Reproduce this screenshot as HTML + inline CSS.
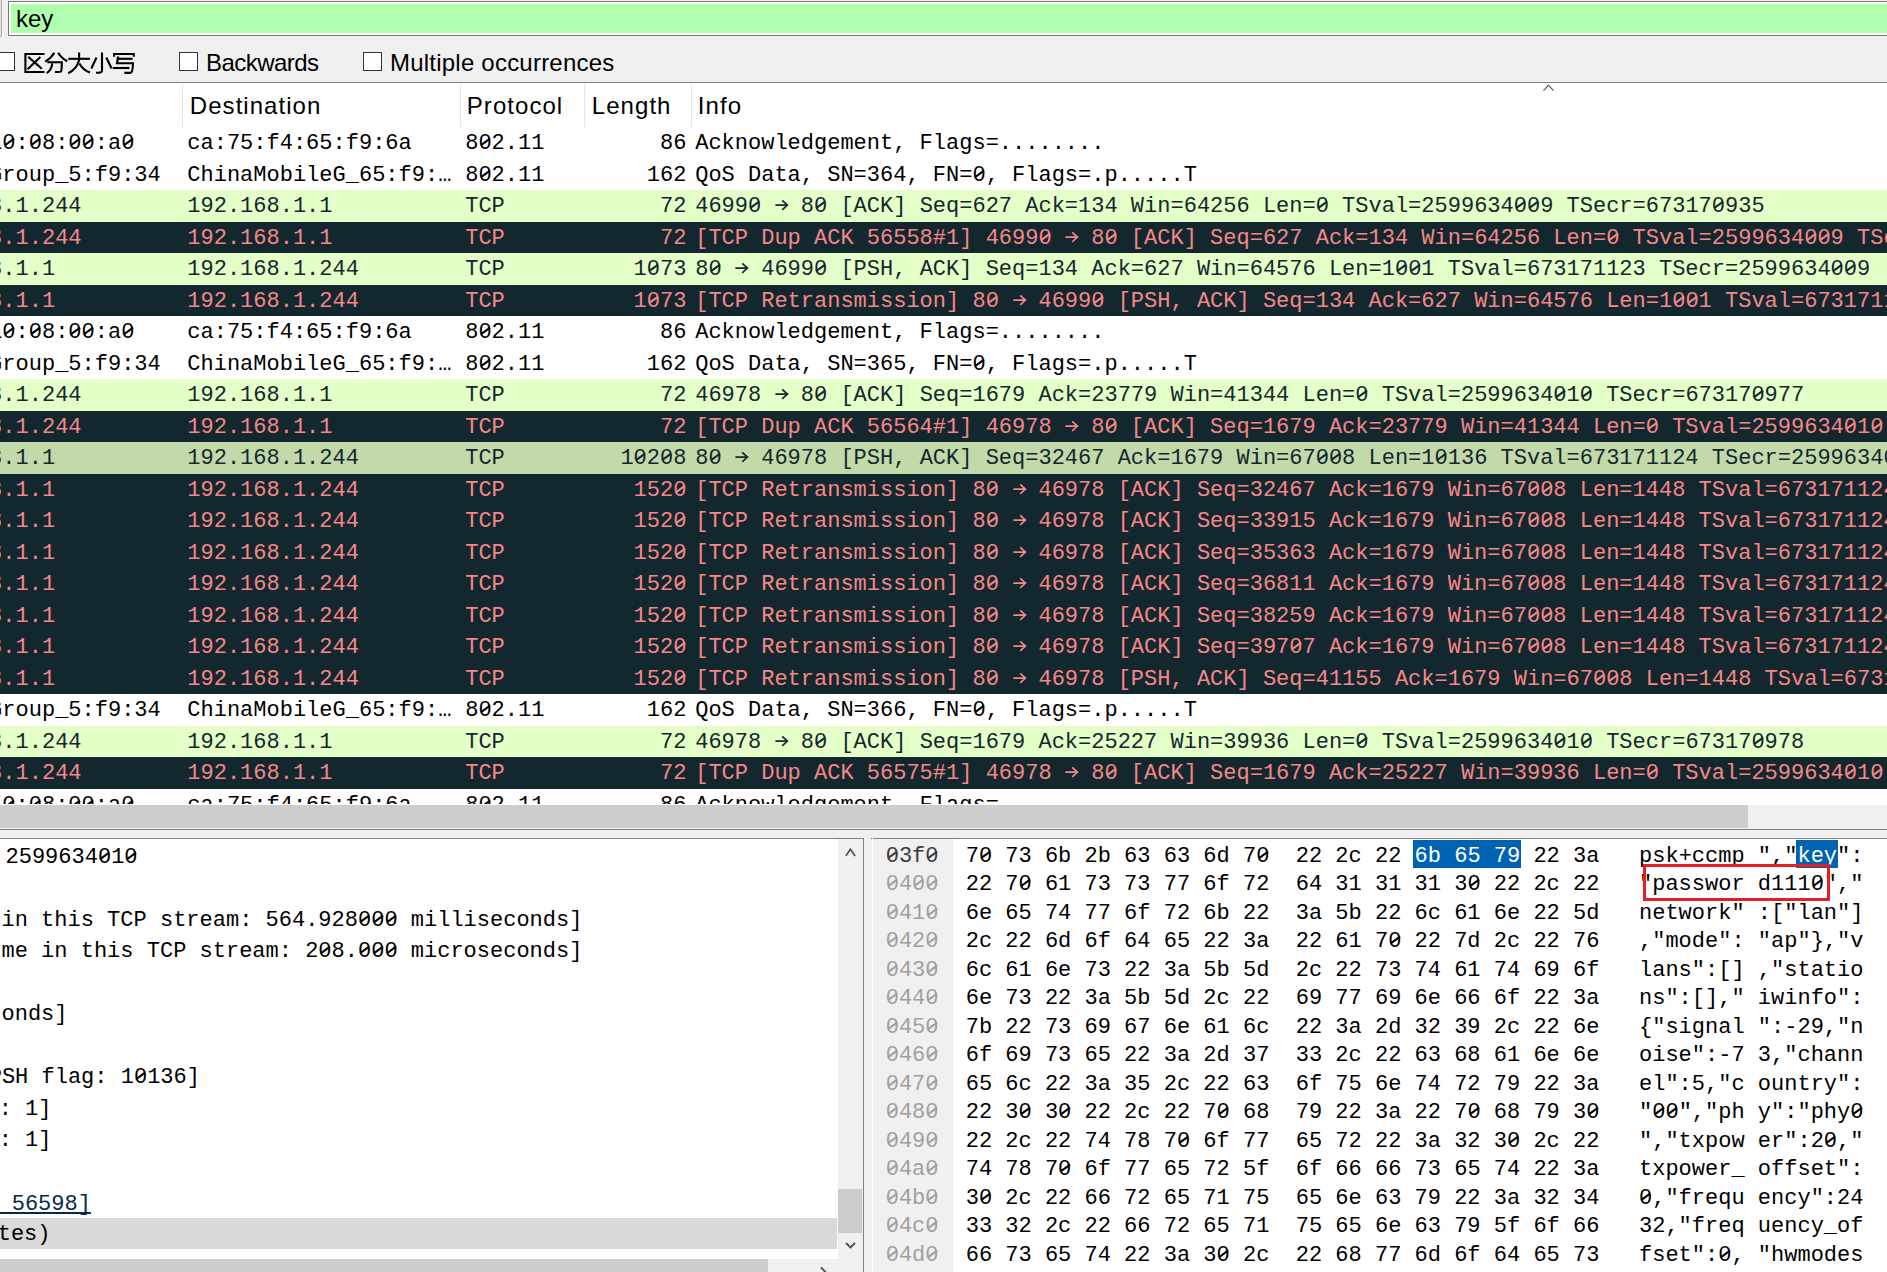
<!DOCTYPE html>
<html><head><meta charset="utf-8"><style>
*{margin:0;padding:0;box-sizing:border-box}
html,body{width:1887px;height:1272px;overflow:hidden;background:#f0f0f0}
body{position:relative;font-family:"Liberation Sans",sans-serif}
.a{position:absolute}
.m{font-family:"Liberation Mono",monospace;font-size:22px;white-space:pre;line-height:31.5px}
.s{font-family:"Liberation Sans",sans-serif;font-size:24px;white-space:pre;letter-spacing:1.05px}
.r{position:absolute;left:0;width:1887px;height:31.5px;overflow:hidden}
.c{position:absolute;top:1px}
.z{font-style:normal;position:relative}
.z::before{content:"";position:absolute;left:4.6px;top:9.3px;width:4px;height:4px;background:var(--bg)}
.z::after{content:"";position:absolute;left:1.4px;top:10.1px;width:10.6px;height:1.6px;background:currentColor;transform:rotate(-36deg)}
</style></head><body>

<div class="a" style="left:-10px;top:-2px;width:12px;height:39px;border:1px solid #adadad;border-radius:2px;background:#e1e1e1"></div>
<div class="a" style="left:8px;top:1px;width:1900px;height:35px;border:1px solid #7a7a7a;background:#fff"></div>
<div class="a" style="left:11px;top:4px;width:1900px;height:29px;background:#afffaf"></div>
<div class="a s" style="left:16px;top:4px;line-height:29px;letter-spacing:0">key</div>
<div class="a" style="left:-4px;top:52px;width:19px;height:19px;border:1.5px solid #333;background:#fff"></div>
<div class="a" style="left:179px;top:52px;width:19px;height:19px;border:1.5px solid #333;background:#fff"></div>
<div class="a" style="left:363px;top:52px;width:19px;height:19px;border:1.5px solid #333;background:#fff"></div>
<div class="a s" style="left:206px;top:48px;line-height:29px;letter-spacing:-0.55px">Backwards</div>
<div class="a s" style="left:390px;top:48px;line-height:29px;letter-spacing:0.22px">Multiple occurrences</div>
<svg class="a" style="left:0;top:0" width="150" height="80" viewBox="0 0 150 80" fill="none" stroke="#000" stroke-width="2.1" stroke-linecap="butt">
<path d="M44.5 54H25.4V72H44.5"/><path d="M28.3 56.9L41.8 68.8M40.3 56.9L27.6 69.2"/>
<path d="M54.3 52.8Q51 58.5 45.2 61.6"/><path d="M58.2 52.8Q61.5 58.5 67.3 61.2"/>
<path d="M47.3 62.3H61.8Q61.8 70 61 71.5Q60 72.3 55 72"/><path d="M52.3 63.3Q51.5 70 46.6 73.2"/>
<path d="M68.3 58.8H90"/><path d="M79.1 52.5V60Q77 69 68.2 73.2"/><path d="M79.4 63.5Q83 70 90 72.6"/>
<path d="M102 52.5V71Q101.5 73 96 72.8"/><path d="M96.5 57.5L91.3 68.5"/><path d="M106.3 57.5L111.6 68.5"/>
<path d="M114.1 56.8V54H133.8V56.8"/><path d="M116.7 58.8H132.6"/><path d="M118.3 56.5L117 63.3H133Q132.7 72 131 72.6Q129 73 124.3 72.8"/><path d="M112.8 68H129.4"/>
</svg>
<div class="a" style="left:0;top:82px;width:1887px;height:1px;background:#7d828c"></div>
<div class="a" style="left:0;top:83px;width:1887px;height:722px;background:#fff"></div>
<div class="a" style="left:182px;top:84px;width:1px;height:43px;background:#e5e5e5"></div>
<div class="a" style="left:460px;top:84px;width:1px;height:43px;background:#e5e5e5"></div>
<div class="a" style="left:584px;top:84px;width:1px;height:43px;background:#e5e5e5"></div>
<div class="a" style="left:691px;top:84px;width:1px;height:43px;background:#e5e5e5"></div>
<div class="a s" style="left:189.8px;top:84px;line-height:44px">Destination</div>
<div class="a s" style="left:466.8px;top:84px;line-height:44px">Protocol</div>
<div class="a s" style="left:591.8px;top:84px;line-height:44px">Length</div>
<div class="a s" style="left:697.8px;top:84px;line-height:44px">Info</div>
<svg class="a" style="left:1540px;top:83px" width="16" height="10"><path d="M3.4 7.6L8.5 2.3L13.6 7.6" fill="none" stroke="#505050" stroke-width="1.1"/></svg>
<div class="a" style="left:0;top:127px;width:1887px;height:677px;overflow:hidden">
<div class="r m" style="top:0.00px;background:#ffffff;color:#000000;--bg:#ffffff">
<span class="c" style="left:-90.10px">9c:a6:a<i class="z">0</i>:<i class="z">0</i>8:<i class="z">0</i><i class="z">0</i>:a<i class="z">0</i></span>
<span class="c" style="left:187.3px">ca:75:f4:65:f9:6a</span>
<span class="c" style="left:465.2px">8<i class="z">0</i>2.11</span>
<span class="c" style="left:660.00px">86</span>
<span class="c" style="left:695.2px">Acknowledgement, Flags=........</span>
</div>
<div class="r m" style="top:31.50px;background:#ffffff;color:#000000;--bg:#ffffff">
<span class="c" style="left:-90.10px">HuaweiGroup_5:f9:34</span>
<span class="c" style="left:187.3px">ChinaMobileG_65:f9:…</span>
<span class="c" style="left:465.2px">8<i class="z">0</i>2.11</span>
<span class="c" style="left:646.80px">162</span>
<span class="c" style="left:695.2px">QoS Data, SN=364, FN=<i class="z">0</i>, Flags=.p.....T</span>
</div>
<div class="r m" style="top:63.00px;background:#e4ffc7;color:#12272e;--bg:#e4ffc7">
<span class="c" style="left:-90.10px">192.168.1.244</span>
<span class="c" style="left:187.3px">192.168.1.1</span>
<span class="c" style="left:465.2px">TCP</span>
<span class="c" style="left:660.00px">72</span>
<span class="c" style="left:695.2px">4699<i class="z">0</i>   8<i class="z">0</i> [ACK] Seq=627 Ack=134 Win=64256 Len=<i class="z">0</i> TSval=2599634<i class="z">0</i><i class="z">0</i>9 TSecr=67317<i class="z">0</i>935</span>
<svg class="c" style="left:773.90px;top:0" width="16" height="31"><path d="M1.4 15.1H14.2M8.2 10.3L13.4 15.1L8.2 19.9" fill="none" stroke="#12272e" stroke-width="1.65"/></svg>
</div>
<div class="r m" style="top:94.50px;background:#12272e;color:#f78787;--bg:#12272e">
<span class="c" style="left:-90.10px">192.168.1.244</span>
<span class="c" style="left:187.3px">192.168.1.1</span>
<span class="c" style="left:465.2px">TCP</span>
<span class="c" style="left:660.00px">72</span>
<span class="c" style="left:695.2px">[TCP Dup ACK 56558#1] 4699<i class="z">0</i>   8<i class="z">0</i> [ACK] Seq=627 Ack=134 Win=64256 Len=<i class="z">0</i> TSval=2599634<i class="z">0</i><i class="z">0</i>9 TSecr=67317<i class="z">0</i>935</span>
<svg class="c" style="left:1064.30px;top:0" width="16" height="31"><path d="M1.4 15.1H14.2M8.2 10.3L13.4 15.1L8.2 19.9" fill="none" stroke="#f78787" stroke-width="1.65"/></svg>
</div>
<div class="r m" style="top:126.00px;background:#e4ffc7;color:#12272e;--bg:#e4ffc7">
<span class="c" style="left:-90.10px">192.168.1.1</span>
<span class="c" style="left:187.3px">192.168.1.244</span>
<span class="c" style="left:465.2px">TCP</span>
<span class="c" style="left:633.60px">1<i class="z">0</i>73</span>
<span class="c" style="left:695.2px">8<i class="z">0</i>   4699<i class="z">0</i> [PSH, ACK] Seq=134 Ack=627 Win=64576 Len=1<i class="z">0</i><i class="z">0</i>1 TSval=673171123 TSecr=2599634<i class="z">0</i><i class="z">0</i>9</span>
<svg class="c" style="left:734.30px;top:0" width="16" height="31"><path d="M1.4 15.1H14.2M8.2 10.3L13.4 15.1L8.2 19.9" fill="none" stroke="#12272e" stroke-width="1.65"/></svg>
</div>
<div class="r m" style="top:157.50px;background:#12272e;color:#f78787;--bg:#12272e">
<span class="c" style="left:-90.10px">192.168.1.1</span>
<span class="c" style="left:187.3px">192.168.1.244</span>
<span class="c" style="left:465.2px">TCP</span>
<span class="c" style="left:633.60px">1<i class="z">0</i>73</span>
<span class="c" style="left:695.2px">[TCP Retransmission] 8<i class="z">0</i>   4699<i class="z">0</i> [PSH, ACK] Seq=134 Ack=627 Win=64576 Len=1<i class="z">0</i><i class="z">0</i>1 TSval=673171123 TSecr=2599634<i class="z">0</i><i class="z">0</i>9</span>
<svg class="c" style="left:1011.50px;top:0" width="16" height="31"><path d="M1.4 15.1H14.2M8.2 10.3L13.4 15.1L8.2 19.9" fill="none" stroke="#f78787" stroke-width="1.65"/></svg>
</div>
<div class="r m" style="top:189.00px;background:#ffffff;color:#000000;--bg:#ffffff">
<span class="c" style="left:-90.10px">9c:a6:a<i class="z">0</i>:<i class="z">0</i>8:<i class="z">0</i><i class="z">0</i>:a<i class="z">0</i></span>
<span class="c" style="left:187.3px">ca:75:f4:65:f9:6a</span>
<span class="c" style="left:465.2px">8<i class="z">0</i>2.11</span>
<span class="c" style="left:660.00px">86</span>
<span class="c" style="left:695.2px">Acknowledgement, Flags=........</span>
</div>
<div class="r m" style="top:220.50px;background:#ffffff;color:#000000;--bg:#ffffff">
<span class="c" style="left:-90.10px">HuaweiGroup_5:f9:34</span>
<span class="c" style="left:187.3px">ChinaMobileG_65:f9:…</span>
<span class="c" style="left:465.2px">8<i class="z">0</i>2.11</span>
<span class="c" style="left:646.80px">162</span>
<span class="c" style="left:695.2px">QoS Data, SN=365, FN=<i class="z">0</i>, Flags=.p.....T</span>
</div>
<div class="r m" style="top:252.00px;background:#e4ffc7;color:#12272e;--bg:#e4ffc7">
<span class="c" style="left:-90.10px">192.168.1.244</span>
<span class="c" style="left:187.3px">192.168.1.1</span>
<span class="c" style="left:465.2px">TCP</span>
<span class="c" style="left:660.00px">72</span>
<span class="c" style="left:695.2px">46978   8<i class="z">0</i> [ACK] Seq=1679 Ack=23779 Win=41344 Len=<i class="z">0</i> TSval=2599634<i class="z">0</i>1<i class="z">0</i> TSecr=67317<i class="z">0</i>977</span>
<svg class="c" style="left:773.90px;top:0" width="16" height="31"><path d="M1.4 15.1H14.2M8.2 10.3L13.4 15.1L8.2 19.9" fill="none" stroke="#12272e" stroke-width="1.65"/></svg>
</div>
<div class="r m" style="top:283.50px;background:#12272e;color:#f78787;--bg:#12272e">
<span class="c" style="left:-90.10px">192.168.1.244</span>
<span class="c" style="left:187.3px">192.168.1.1</span>
<span class="c" style="left:465.2px">TCP</span>
<span class="c" style="left:660.00px">72</span>
<span class="c" style="left:695.2px">[TCP Dup ACK 56564#1] 46978   8<i class="z">0</i> [ACK] Seq=1679 Ack=23779 Win=41344 Len=<i class="z">0</i> TSval=2599634<i class="z">0</i>1<i class="z">0</i> TSecr=67317<i class="z">0</i>977</span>
<svg class="c" style="left:1064.30px;top:0" width="16" height="31"><path d="M1.4 15.1H14.2M8.2 10.3L13.4 15.1L8.2 19.9" fill="none" stroke="#f78787" stroke-width="1.65"/></svg>
</div>
<div class="r m" style="top:315.00px;background:#c3d9a9;color:#12272e;--bg:#c3d9a9">
<span class="c" style="left:-90.10px">192.168.1.1</span>
<span class="c" style="left:187.3px">192.168.1.244</span>
<span class="c" style="left:465.2px">TCP</span>
<span class="c" style="left:620.40px">1<i class="z">0</i>2<i class="z">0</i>8</span>
<span class="c" style="left:695.2px">8<i class="z">0</i>   46978 [PSH, ACK] Seq=32467 Ack=1679 Win=67<i class="z">0</i><i class="z">0</i>8 Len=1<i class="z">0</i>136 TSval=673171124 TSecr=2599634<i class="z">0</i>1<i class="z">0</i></span>
<svg class="c" style="left:734.30px;top:0" width="16" height="31"><path d="M1.4 15.1H14.2M8.2 10.3L13.4 15.1L8.2 19.9" fill="none" stroke="#12272e" stroke-width="1.65"/></svg>
</div>
<div class="r m" style="top:346.50px;background:#12272e;color:#f78787;--bg:#12272e">
<span class="c" style="left:-90.10px">192.168.1.1</span>
<span class="c" style="left:187.3px">192.168.1.244</span>
<span class="c" style="left:465.2px">TCP</span>
<span class="c" style="left:633.60px">152<i class="z">0</i></span>
<span class="c" style="left:695.2px">[TCP Retransmission] 8<i class="z">0</i>   46978 [ACK] Seq=32467 Ack=1679 Win=67<i class="z">0</i><i class="z">0</i>8 Len=1448 TSval=673171124 TSecr=2599634<i class="z">0</i>1<i class="z">0</i></span>
<svg class="c" style="left:1011.50px;top:0" width="16" height="31"><path d="M1.4 15.1H14.2M8.2 10.3L13.4 15.1L8.2 19.9" fill="none" stroke="#f78787" stroke-width="1.65"/></svg>
</div>
<div class="r m" style="top:378.00px;background:#12272e;color:#f78787;--bg:#12272e">
<span class="c" style="left:-90.10px">192.168.1.1</span>
<span class="c" style="left:187.3px">192.168.1.244</span>
<span class="c" style="left:465.2px">TCP</span>
<span class="c" style="left:633.60px">152<i class="z">0</i></span>
<span class="c" style="left:695.2px">[TCP Retransmission] 8<i class="z">0</i>   46978 [ACK] Seq=33915 Ack=1679 Win=67<i class="z">0</i><i class="z">0</i>8 Len=1448 TSval=673171124 TSecr=2599634<i class="z">0</i>1<i class="z">0</i></span>
<svg class="c" style="left:1011.50px;top:0" width="16" height="31"><path d="M1.4 15.1H14.2M8.2 10.3L13.4 15.1L8.2 19.9" fill="none" stroke="#f78787" stroke-width="1.65"/></svg>
</div>
<div class="r m" style="top:409.50px;background:#12272e;color:#f78787;--bg:#12272e">
<span class="c" style="left:-90.10px">192.168.1.1</span>
<span class="c" style="left:187.3px">192.168.1.244</span>
<span class="c" style="left:465.2px">TCP</span>
<span class="c" style="left:633.60px">152<i class="z">0</i></span>
<span class="c" style="left:695.2px">[TCP Retransmission] 8<i class="z">0</i>   46978 [ACK] Seq=35363 Ack=1679 Win=67<i class="z">0</i><i class="z">0</i>8 Len=1448 TSval=673171124 TSecr=2599634<i class="z">0</i>1<i class="z">0</i></span>
<svg class="c" style="left:1011.50px;top:0" width="16" height="31"><path d="M1.4 15.1H14.2M8.2 10.3L13.4 15.1L8.2 19.9" fill="none" stroke="#f78787" stroke-width="1.65"/></svg>
</div>
<div class="r m" style="top:441.00px;background:#12272e;color:#f78787;--bg:#12272e">
<span class="c" style="left:-90.10px">192.168.1.1</span>
<span class="c" style="left:187.3px">192.168.1.244</span>
<span class="c" style="left:465.2px">TCP</span>
<span class="c" style="left:633.60px">152<i class="z">0</i></span>
<span class="c" style="left:695.2px">[TCP Retransmission] 8<i class="z">0</i>   46978 [ACK] Seq=36811 Ack=1679 Win=67<i class="z">0</i><i class="z">0</i>8 Len=1448 TSval=673171124 TSecr=2599634<i class="z">0</i>1<i class="z">0</i></span>
<svg class="c" style="left:1011.50px;top:0" width="16" height="31"><path d="M1.4 15.1H14.2M8.2 10.3L13.4 15.1L8.2 19.9" fill="none" stroke="#f78787" stroke-width="1.65"/></svg>
</div>
<div class="r m" style="top:472.50px;background:#12272e;color:#f78787;--bg:#12272e">
<span class="c" style="left:-90.10px">192.168.1.1</span>
<span class="c" style="left:187.3px">192.168.1.244</span>
<span class="c" style="left:465.2px">TCP</span>
<span class="c" style="left:633.60px">152<i class="z">0</i></span>
<span class="c" style="left:695.2px">[TCP Retransmission] 8<i class="z">0</i>   46978 [ACK] Seq=38259 Ack=1679 Win=67<i class="z">0</i><i class="z">0</i>8 Len=1448 TSval=673171124 TSecr=2599634<i class="z">0</i>1<i class="z">0</i></span>
<svg class="c" style="left:1011.50px;top:0" width="16" height="31"><path d="M1.4 15.1H14.2M8.2 10.3L13.4 15.1L8.2 19.9" fill="none" stroke="#f78787" stroke-width="1.65"/></svg>
</div>
<div class="r m" style="top:504.00px;background:#12272e;color:#f78787;--bg:#12272e">
<span class="c" style="left:-90.10px">192.168.1.1</span>
<span class="c" style="left:187.3px">192.168.1.244</span>
<span class="c" style="left:465.2px">TCP</span>
<span class="c" style="left:633.60px">152<i class="z">0</i></span>
<span class="c" style="left:695.2px">[TCP Retransmission] 8<i class="z">0</i>   46978 [ACK] Seq=397<i class="z">0</i>7 Ack=1679 Win=67<i class="z">0</i><i class="z">0</i>8 Len=1448 TSval=673171124 TSecr=2599634<i class="z">0</i>1<i class="z">0</i></span>
<svg class="c" style="left:1011.50px;top:0" width="16" height="31"><path d="M1.4 15.1H14.2M8.2 10.3L13.4 15.1L8.2 19.9" fill="none" stroke="#f78787" stroke-width="1.65"/></svg>
</div>
<div class="r m" style="top:535.50px;background:#12272e;color:#f78787;--bg:#12272e">
<span class="c" style="left:-90.10px">192.168.1.1</span>
<span class="c" style="left:187.3px">192.168.1.244</span>
<span class="c" style="left:465.2px">TCP</span>
<span class="c" style="left:633.60px">152<i class="z">0</i></span>
<span class="c" style="left:695.2px">[TCP Retransmission] 8<i class="z">0</i>   46978 [PSH, ACK] Seq=41155 Ack=1679 Win=67<i class="z">0</i><i class="z">0</i>8 Len=1448 TSval=673171124 TSecr=2599634<i class="z">0</i>1<i class="z">0</i></span>
<svg class="c" style="left:1011.50px;top:0" width="16" height="31"><path d="M1.4 15.1H14.2M8.2 10.3L13.4 15.1L8.2 19.9" fill="none" stroke="#f78787" stroke-width="1.65"/></svg>
</div>
<div class="r m" style="top:567.00px;background:#ffffff;color:#000000;--bg:#ffffff">
<span class="c" style="left:-90.10px">HuaweiGroup_5:f9:34</span>
<span class="c" style="left:187.3px">ChinaMobileG_65:f9:…</span>
<span class="c" style="left:465.2px">8<i class="z">0</i>2.11</span>
<span class="c" style="left:646.80px">162</span>
<span class="c" style="left:695.2px">QoS Data, SN=366, FN=<i class="z">0</i>, Flags=.p.....T</span>
</div>
<div class="r m" style="top:598.50px;background:#e4ffc7;color:#12272e;--bg:#e4ffc7">
<span class="c" style="left:-90.10px">192.168.1.244</span>
<span class="c" style="left:187.3px">192.168.1.1</span>
<span class="c" style="left:465.2px">TCP</span>
<span class="c" style="left:660.00px">72</span>
<span class="c" style="left:695.2px">46978   8<i class="z">0</i> [ACK] Seq=1679 Ack=25227 Win=39936 Len=<i class="z">0</i> TSval=2599634<i class="z">0</i>1<i class="z">0</i> TSecr=67317<i class="z">0</i>978</span>
<svg class="c" style="left:773.90px;top:0" width="16" height="31"><path d="M1.4 15.1H14.2M8.2 10.3L13.4 15.1L8.2 19.9" fill="none" stroke="#12272e" stroke-width="1.65"/></svg>
</div>
<div class="r m" style="top:630.00px;background:#12272e;color:#f78787;--bg:#12272e">
<span class="c" style="left:-90.10px">192.168.1.244</span>
<span class="c" style="left:187.3px">192.168.1.1</span>
<span class="c" style="left:465.2px">TCP</span>
<span class="c" style="left:660.00px">72</span>
<span class="c" style="left:695.2px">[TCP Dup ACK 56575#1] 46978   8<i class="z">0</i> [ACK] Seq=1679 Ack=25227 Win=39936 Len=<i class="z">0</i> TSval=2599634<i class="z">0</i>1<i class="z">0</i> TSecr=67317<i class="z">0</i>978</span>
<svg class="c" style="left:1064.30px;top:0" width="16" height="31"><path d="M1.4 15.1H14.2M8.2 10.3L13.4 15.1L8.2 19.9" fill="none" stroke="#f78787" stroke-width="1.65"/></svg>
</div>
<div class="r m" style="top:661.50px;background:#ffffff;color:#000000;--bg:#ffffff">
<span class="c" style="left:-90.10px">9c:a6:a<i class="z">0</i>:<i class="z">0</i>8:<i class="z">0</i><i class="z">0</i>:a<i class="z">0</i></span>
<span class="c" style="left:187.3px">ca:75:f4:65:f9:6a</span>
<span class="c" style="left:465.2px">8<i class="z">0</i>2.11</span>
<span class="c" style="left:660.00px">86</span>
<span class="c" style="left:695.2px">Acknowledgement, Flags=........</span>
</div>
</div>
<div class="a" style="left:0;top:805px;width:1887px;height:23px;background:#f0f0f0"></div>
<div class="a" style="left:0;top:805px;width:1748px;height:23px;background:#cdcdcd"></div>
<div class="a" style="left:0;top:829px;width:1887px;height:1px;background:#7d828c"></div>
<div class="a" style="left:0;top:838px;width:864px;height:1px;background:#7d828c"></div>
<div class="a" style="left:871px;top:838px;width:1016px;height:1px;background:#7d828c"></div>
<div class="a" style="left:0;top:839px;width:838px;height:420px;background:#fff;overflow:hidden;--bg:#fff">
<div class="a m" style="left:5.5px;top:2.5px;color:#000">2599634<i class="z">0</i>1<i class="z">0</i></div>
<div class="a m" style="left:1.5px;top:65.5px;color:#000">in this TCP stream: 564.928<i class="z">0</i><i class="z">0</i><i class="z">0</i> milliseconds]</div>
<div class="a m" style="left:1.5px;top:97.0px;color:#000">me in this TCP stream: 2<i class="z">0</i>8.<i class="z">0</i><i class="z">0</i><i class="z">0</i> microseconds]</div>
<div class="a m" style="left:1.5px;top:160.0px;color:#000">onds]</div>
<div class="a m" style="left:-11.3px;top:223.0px;color:#000">PSH flag: 1<i class="z">0</i>136]</div>
<div class="a m" style="left:-1.3px;top:254.5px;color:#000">: 1]</div>
<div class="a m" style="left:-1.3px;top:286.0px;color:#000">: 1]</div>
<div class="a m" style="left:-54.3px;top:349.5px;color:#06294a"><span style="text-decoration:underline;text-decoration-skip-ink:none">eam: 56598]</span></div>
<div class="a" style="left:0;top:379.0px;width:837px;height:31px;background:#d9d9d9"></div>
<div class="a m" style="left:-2.3px;top:380.0px;color:#000">tes)</div>
</div>
<div class="a" style="left:838px;top:839px;width:25px;height:420px;background:#f0f0f0"></div>
<div class="a" style="left:838px;top:1189px;width:24px;height:44px;background:#cdcdcd"></div>
<svg class="a" style="left:840px;top:843px" width="20" height="20"><path d="M5.9 12.9L10.4 6.2L15.1 12.9" fill="none" stroke="#505050" stroke-width="1.7"/></svg>
<svg class="a" style="left:840px;top:1236px" width="20" height="20"><path d="M6 7L10.5 11.5L15 7" fill="none" stroke="#505050" stroke-width="1.8"/></svg>
<div class="a" style="left:863px;top:838px;width:1px;height:434px;background:#7d828c"></div>
<div class="a" style="left:0;top:1259px;width:768px;height:13px;background:#cdcdcd"></div>
<svg class="a" style="left:815px;top:1259px" width="20" height="13"><path d="M6 8.5L11.5 14" fill="none" stroke="#505050" stroke-width="1.8"/></svg>
<div class="a" style="left:872px;top:838px;width:1px;height:434px;background:#ffffff"></div>
<div class="a" style="left:873px;top:839px;width:1014px;height:433px;background:#fff"></div>
<div class="a" style="left:873px;top:839px;width:80px;height:433px;background:#f0f0f0"></div>
<div class="a" style="left:1412.8px;top:840px;width:108.1px;height:28px;background:#0063b1"></div>
<div class="a" style="left:1796.1px;top:840px;width:42.1px;height:28px;background:#0063b1"></div>
<div class="a m" style="left:885.7px;top:842.60px;line-height:28.5px;color:#3c3c3c;--bg:#f0f0f0"><i class="z">0</i>3f<i class="z">0</i></div>
<div class="a m" style="left:965.7px;top:842.60px;line-height:28.5px;color:#000;--bg:#fff">7<i class="z">0</i> 73 6b 2b 63 63 6d 7<i class="z">0</i>  22 2c 22 <span style="color:#fff">6b 65 79</span> 22 3a   psk+ccmp &quot;,&quot;<span style="color:#fff">key</span>&quot;:</div>
<div class="a m" style="left:885.7px;top:871.10px;line-height:28.5px;color:#a0a0a0;--bg:#f0f0f0"><i class="z">0</i>4<i class="z">0</i><i class="z">0</i></div>
<div class="a m" style="left:965.7px;top:871.10px;line-height:28.5px;color:#000;--bg:#fff">22 7<i class="z">0</i> 61 73 73 77 6f 72  64 31 31 31 3<i class="z">0</i> 22 2c 22   &quot;passwor d111<i class="z">0</i>&quot;,&quot;</div>
<div class="a m" style="left:885.7px;top:899.60px;line-height:28.5px;color:#a0a0a0;--bg:#f0f0f0"><i class="z">0</i>41<i class="z">0</i></div>
<div class="a m" style="left:965.7px;top:899.60px;line-height:28.5px;color:#000;--bg:#fff">6e 65 74 77 6f 72 6b 22  3a 5b 22 6c 61 6e 22 5d   network&quot; :[&quot;lan&quot;]</div>
<div class="a m" style="left:885.7px;top:928.10px;line-height:28.5px;color:#a0a0a0;--bg:#f0f0f0"><i class="z">0</i>42<i class="z">0</i></div>
<div class="a m" style="left:965.7px;top:928.10px;line-height:28.5px;color:#000;--bg:#fff">2c 22 6d 6f 64 65 22 3a  22 61 7<i class="z">0</i> 22 7d 2c 22 76   ,&quot;mode&quot;: &quot;ap&quot;},&quot;v</div>
<div class="a m" style="left:885.7px;top:956.60px;line-height:28.5px;color:#a0a0a0;--bg:#f0f0f0"><i class="z">0</i>43<i class="z">0</i></div>
<div class="a m" style="left:965.7px;top:956.60px;line-height:28.5px;color:#000;--bg:#fff">6c 61 6e 73 22 3a 5b 5d  2c 22 73 74 61 74 69 6f   lans&quot;:[] ,&quot;statio</div>
<div class="a m" style="left:885.7px;top:985.10px;line-height:28.5px;color:#a0a0a0;--bg:#f0f0f0"><i class="z">0</i>44<i class="z">0</i></div>
<div class="a m" style="left:965.7px;top:985.10px;line-height:28.5px;color:#000;--bg:#fff">6e 73 22 3a 5b 5d 2c 22  69 77 69 6e 66 6f 22 3a   ns&quot;:[],&quot; iwinfo&quot;:</div>
<div class="a m" style="left:885.7px;top:1013.60px;line-height:28.5px;color:#a0a0a0;--bg:#f0f0f0"><i class="z">0</i>45<i class="z">0</i></div>
<div class="a m" style="left:965.7px;top:1013.60px;line-height:28.5px;color:#000;--bg:#fff">7b 22 73 69 67 6e 61 6c  22 3a 2d 32 39 2c 22 6e   {&quot;signal &quot;:-29,&quot;n</div>
<div class="a m" style="left:885.7px;top:1042.10px;line-height:28.5px;color:#a0a0a0;--bg:#f0f0f0"><i class="z">0</i>46<i class="z">0</i></div>
<div class="a m" style="left:965.7px;top:1042.10px;line-height:28.5px;color:#000;--bg:#fff">6f 69 73 65 22 3a 2d 37  33 2c 22 63 68 61 6e 6e   oise&quot;:-7 3,&quot;chann</div>
<div class="a m" style="left:885.7px;top:1070.60px;line-height:28.5px;color:#a0a0a0;--bg:#f0f0f0"><i class="z">0</i>47<i class="z">0</i></div>
<div class="a m" style="left:965.7px;top:1070.60px;line-height:28.5px;color:#000;--bg:#fff">65 6c 22 3a 35 2c 22 63  6f 75 6e 74 72 79 22 3a   el&quot;:5,&quot;c ountry&quot;:</div>
<div class="a m" style="left:885.7px;top:1099.10px;line-height:28.5px;color:#a0a0a0;--bg:#f0f0f0"><i class="z">0</i>48<i class="z">0</i></div>
<div class="a m" style="left:965.7px;top:1099.10px;line-height:28.5px;color:#000;--bg:#fff">22 3<i class="z">0</i> 3<i class="z">0</i> 22 2c 22 7<i class="z">0</i> 68  79 22 3a 22 7<i class="z">0</i> 68 79 3<i class="z">0</i>   &quot;<i class="z">0</i><i class="z">0</i>&quot;,&quot;ph y&quot;:&quot;phy<i class="z">0</i></div>
<div class="a m" style="left:885.7px;top:1127.60px;line-height:28.5px;color:#a0a0a0;--bg:#f0f0f0"><i class="z">0</i>49<i class="z">0</i></div>
<div class="a m" style="left:965.7px;top:1127.60px;line-height:28.5px;color:#000;--bg:#fff">22 2c 22 74 78 7<i class="z">0</i> 6f 77  65 72 22 3a 32 3<i class="z">0</i> 2c 22   &quot;,&quot;txpow er&quot;:2<i class="z">0</i>,&quot;</div>
<div class="a m" style="left:885.7px;top:1156.10px;line-height:28.5px;color:#a0a0a0;--bg:#f0f0f0"><i class="z">0</i>4a<i class="z">0</i></div>
<div class="a m" style="left:965.7px;top:1156.10px;line-height:28.5px;color:#000;--bg:#fff">74 78 7<i class="z">0</i> 6f 77 65 72 5f  6f 66 66 73 65 74 22 3a   txpower_ offset&quot;:</div>
<div class="a m" style="left:885.7px;top:1184.60px;line-height:28.5px;color:#a0a0a0;--bg:#f0f0f0"><i class="z">0</i>4b<i class="z">0</i></div>
<div class="a m" style="left:965.7px;top:1184.60px;line-height:28.5px;color:#000;--bg:#fff">3<i class="z">0</i> 2c 22 66 72 65 71 75  65 6e 63 79 22 3a 32 34   <i class="z">0</i>,&quot;frequ ency&quot;:24</div>
<div class="a m" style="left:885.7px;top:1213.10px;line-height:28.5px;color:#a0a0a0;--bg:#f0f0f0"><i class="z">0</i>4c<i class="z">0</i></div>
<div class="a m" style="left:965.7px;top:1213.10px;line-height:28.5px;color:#000;--bg:#fff">33 32 2c 22 66 72 65 71  75 65 6e 63 79 5f 6f 66   32,&quot;freq uency_of</div>
<div class="a m" style="left:885.7px;top:1241.60px;line-height:28.5px;color:#a0a0a0;--bg:#f0f0f0"><i class="z">0</i>4d<i class="z">0</i></div>
<div class="a m" style="left:965.7px;top:1241.60px;line-height:28.5px;color:#000;--bg:#fff">66 73 65 74 22 3a 3<i class="z">0</i> 2c  22 68 77 6d 6f 64 65 73   fset&quot;:<i class="z">0</i>, &quot;hwmodes</div>
<div class="a" style="left:1643px;top:864px;width:187px;height:37px;border:3px solid #e41e26"></div>
</body></html>
